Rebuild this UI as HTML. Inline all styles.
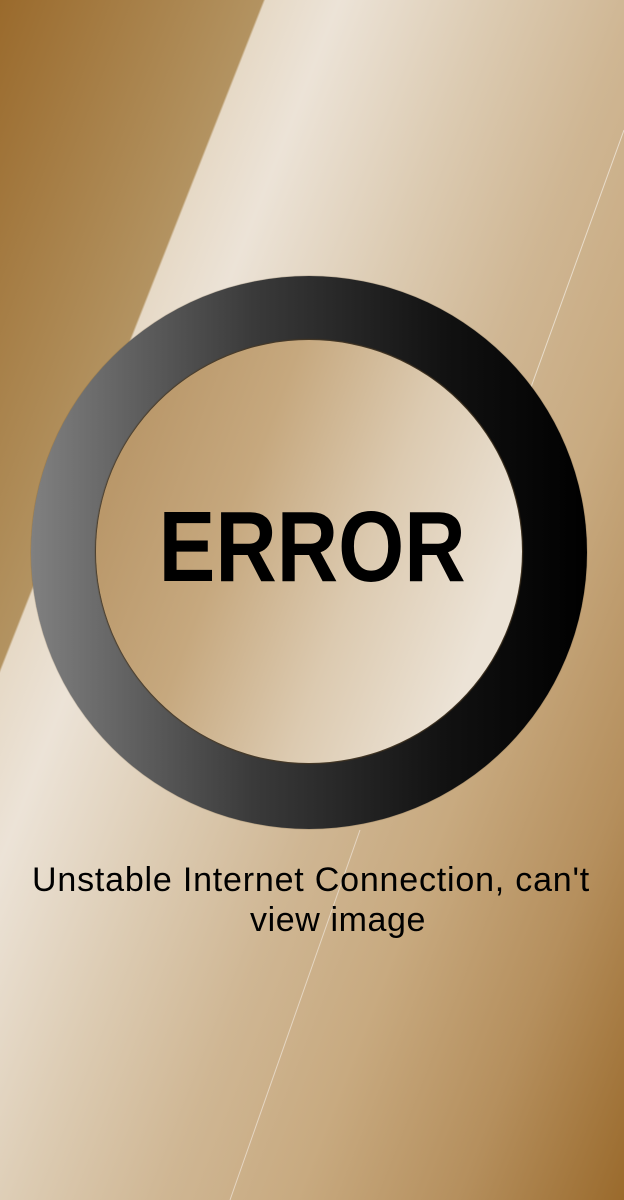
<!DOCTYPE html>
<html><head><meta charset="utf-8"><style>
html,body{margin:0;padding:0}
body{width:624px;height:1200px;overflow:hidden;position:relative;font-family:"Liberation Sans",sans-serif;
background:linear-gradient(111.5deg,#9a6a2c 0%,#b39361 24%,#e6d9c6 24.2%,#ece3d7 31%,#dccbb2 45%,#cfb693 58%,#c8aa80 70%,#b58f5d 85%,#9a6a2c 100%);}
.ring{position:absolute;left:31px;top:276px;width:556px;height:553px;border-radius:50%;
background:linear-gradient(90deg,#808080 0%,#3a3a3a 40%,#111 75%,#000 100%);box-shadow:0 0 1px #5a4a30;}
.inner{position:absolute;left:96px;top:340px;width:426px;height:423px;border-radius:50%;
background:linear-gradient(111deg,#b38f5f 0%,#c6a87e 35%,#dccab0 60%,#ece3d6 85%);box-shadow:0 0 1px 1px #4a3a24;}
.err{position:absolute;left:0;width:624px;top:490px;text-align:center;font-weight:bold;font-size:100px;color:#000;transform:scaleX(0.85);transform-origin:313px 0}
.l1{position:absolute;left:32px;top:860px;white-space:nowrap;font-size:34px;letter-spacing:0.8px;line-height:40px;color:#000}
.l2{position:absolute;left:250px;top:900px;white-space:nowrap;font-size:34px;letter-spacing:0.6px;line-height:40px;color:#000}
svg{position:absolute;left:0;top:0}
</style></head><body>
<svg width="624" height="1200"><path d="M624 130 L530 390" stroke="#efe6da" stroke-width="1" fill="none" opacity="0.8"/><path d="M360 830 L230 1200" stroke="#efe6da" stroke-width="1" fill="none" opacity="0.7"/></svg>
<div class="ring"></div>
<div class="inner"></div>
<div class="err">ERROR</div>
<div class="l1">Unstable Internet Connection, can't</div>
<div class="l2">view image</div>
</body></html>
